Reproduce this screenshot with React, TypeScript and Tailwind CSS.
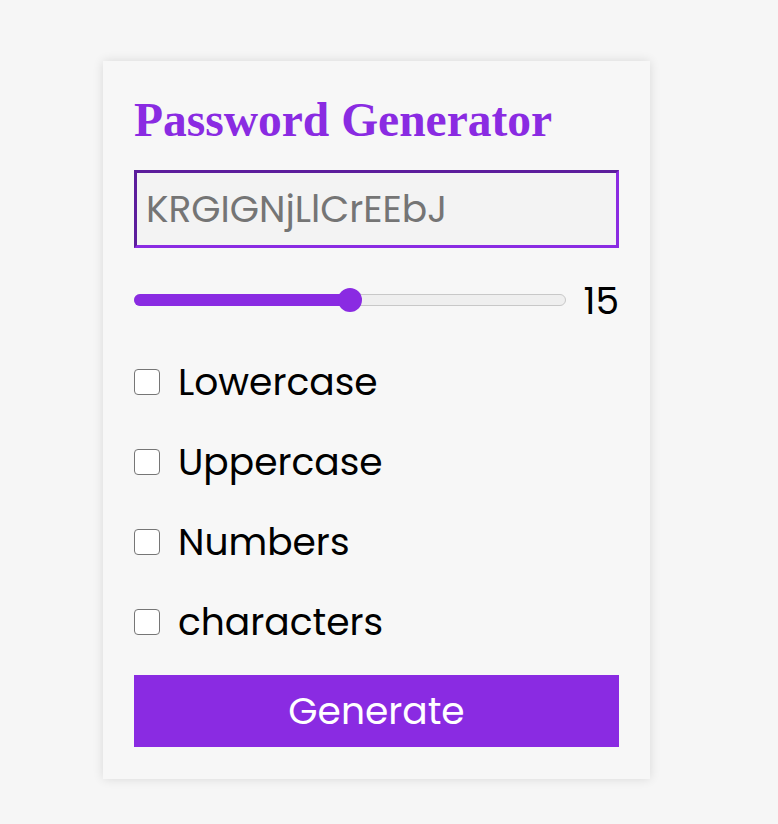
import { useState } from "react";

const OPTIONS = ["Lowercase", "Uppercase", "Numbers", "characters"];

export default function App() {
  const [length] = useState(15);
  const [password] = useState("KRGIGNjLlCrEEbJ");

  return (
    <div className="min-h-screen bg-[#f6f6f6] pt-[61px] pl-[103px] font-['Poppins','Open_Sans',sans-serif]">
      <div className="w-[547px] h-[718px] bg-[#f7f7f7] shadow-[0_0_10px_rgba(0,0,0,0.12)] px-[31px] pt-[33px]">
        <h1 className="font-['Liberation_Serif',serif] font-bold text-[47.5px] leading-[52px] text-[#8a2be2] whitespace-nowrap">
          Password Generator
        </h1>

        <div className="mt-[24px] h-[78px] flex items-center bg-[#f3f3f3] border-[3px] border-t-[#5c1d9c] border-l-[#5c1d9c] border-r-[#8a2be2] border-b-[#8a2be2] px-[9px]">
          <span className="text-[37.6px] text-[#757575]">{password}</span>
        </div>

        <div className="mt-[28px] h-[48px] flex items-center">
          <div className="relative w-[432px] h-[12px]">
            <div className="absolute inset-0 rounded-full bg-[#efefef] border border-[#c8c8c8]" />
            <div className="absolute left-0 top-0 h-full w-[216px] rounded-full bg-[#8a2be2]" />
            <div className="absolute left-[204px] top-1/2 -translate-y-1/2 w-[24px] h-[24px] rounded-full bg-[#8a2be2]" />
          </div>
          <span className="ml-auto mt-[3px] text-[37.6px] text-black">{length}</span>
        </div>

        <div className="mt-[18px]">
          {OPTIONS.map((opt) => (
            <label key={opt} className="h-[80px] flex items-center">
              <span className="w-[26px] h-[26px] rounded-[4px] border-[1.5px] border-[#767676] bg-white" />
              <span className="ml-[18px] text-[37.6px] text-black">{opt}</span>
            </label>
          ))}
        </div>

        <button className="mt-[13px] w-full h-[72px] bg-[#8a2be2] text-white text-[37.6px]">
          Generate
        </button>
      </div>
    </div>
  );
}
